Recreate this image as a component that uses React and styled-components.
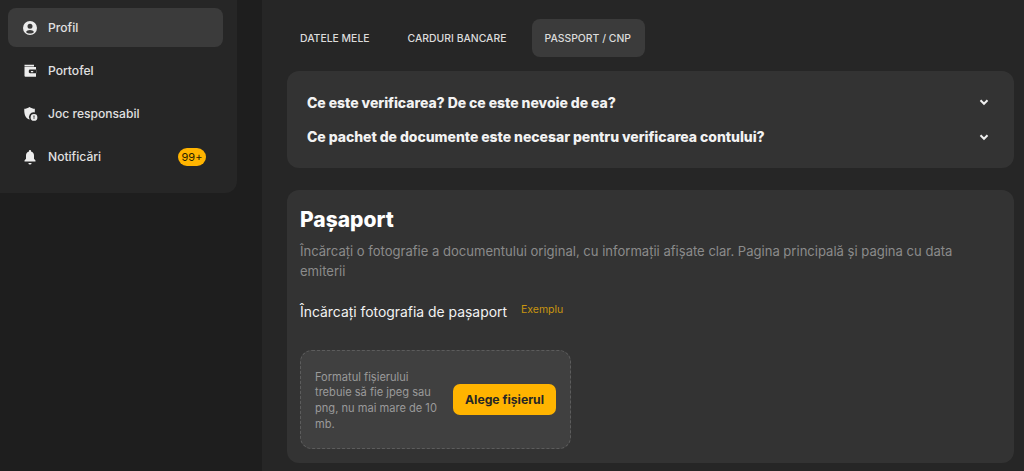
import React from "react";
import styled, { createGlobalStyle } from "styled-components";

const Global = createGlobalStyle`
  html, body { margin: 0; padding: 0; background: #1d1d1d; }
  body { font-family: Inter, "Noto Sans", sans-serif; overflow: hidden; }
  * { box-sizing: border-box; }
`;

const Page = styled.div`
  display: flex;
  width: 1024px;
  height: 471px;
  overflow: hidden;
  background: #1e1e1e;
`;
const Aside = styled.aside`
  width: 262px;
  flex: none;
`;
const SideCard = styled.nav`
  width: 237px;
  height: 193px;
  padding: 8px 14px 0 8px;
  background: #262626;
  border-radius: 0 0 12px 0;
  display: flex;
  flex-direction: column;
  gap: 4px;
`;
const NavItem = styled.a`
  display: flex;
  align-items: center;
  height: 39px;
  padding: 0 17px 0 14px;
  border-radius: 8px;
  font-size: 12.1px;
  font-weight: 500;
  color: #e0e0e0;
  background: ${(p) => (p.$active ? "#3b3b3b" : "transparent")};
`;
const NavIcon = styled.svg`
  width: 16px;
  height: 16px;
  margin-right: 10px;
  flex: none;
  fill: #ececec;
`;
const NavLabel = styled.span`
  flex: 1;
`;
const Badge = styled.span`
  width: 28px;
  height: 18px;
  border-radius: 9px;
  background: #ffb400;
  color: #2a2200;
  font-size: 11px;
  font-weight: 400;
  display: flex;
  align-items: center;
  justify-content: center;
`;
const Main = styled.main`
  flex: 1;
  background: #262626;
  padding: 19px 10px 0 25px;
`;
const Tabs = styled.div`
  display: flex;
  gap: 11px;
  margin-bottom: 14px;
`;
const Tab = styled.button`
  height: 38px;
  padding: 0 14px 0 13px;
  border: 0;
  border-radius: 8px;
  font: 500 10.42px Inter, sans-serif;
  text-transform: uppercase;
  color: #dcdcdc;
  background: ${(p) => (p.$active ? "#3b3b3b" : "transparent")};
`;
const FaqCard = styled.section`
  height: 97px;
  padding: 14px 20px;
  background: #333333;
  border-radius: 12px;
  margin-bottom: 22px;
  display: flex;
  flex-direction: column;
`;
const FaqRow = styled.div`
  height: 35px;
  display: flex;
  align-items: center;
  justify-content: space-between;
  padding-right: 5px;
  font-size: 14px;
  font-weight: 800;
  letter-spacing: -0.05px;
  color: #f2f2f2;
`;
const Chevron = styled.svg`
  width: 10px;
  height: 10px;
  fill: none;
  stroke: #f0f0f0;
  stroke-width: 2;
`;
const Card = styled.section`
  height: 273px;
  padding: 17px 13px 0;
  background: #333333;
  border-radius: 12px;
`;
const Title = styled.h2`
  margin: 0 0 9px;
  font-size: 21px;
  line-height: 25px;
  font-weight: 800;
  color: #ffffff;
`;
const Desc = styled.p`
  margin: 0 0 19px;
  font-size: 13.05px;
  line-height: 20px;
  color: #8b8b8b;
`;
const LabelRow = styled.div`
  display: flex;
  align-items: flex-start;
  gap: 14px;
  margin-bottom: 26px;
`;
const Label = styled.span`
  font-size: 13.9px;
  line-height: 24px;
  color: #f2f2f2;
`;
const Example = styled.span`
  font-size: 10.5px;
  line-height: 19px;
  color: #c9950f;
`;
const Drop = styled.div`
  width: 271px;
  height: 99px;
  padding: 0 14px;
  display: flex;
  align-items: center;
  justify-content: space-between;
  background: #404040;
  border: 1px dashed #5c5c5c;
  border-radius: 12px;
`;
const Hint = styled.p`
  width: 122px;
  margin: 3px 0 0;
  font-size: 11.1px;
  line-height: 15.6px;
  color: #9a9a9a;
`;
const Pick = styled.button`
  width: 103px;
  height: 31px;
  border: 0;
  border-radius: 7px;
  background: #ffb400;
  color: #262626;
  font: 700 12.2px Inter, sans-serif;
`;

const ChevronIcon = () => (
  <Chevron viewBox="0 0 10 10">
    <path d="M1.500 3.200 5 6.800l3.500-3.600" />
  </Chevron>
);

const UserIcon = () => (
  <NavIcon viewBox="0 0 16 16">
    <path fillRule="evenodd" d="M8 1a7 7 0 1 1 0 14A7 7 0 0 1 8 1Zm0 2.800a2.500 2.500 0 1 0 0 5 2.500 2.500 0 0 0 0-5Zm0 6.200c-1.900 0-3.400.8-4 2 1 1 2.400 1.600 4 1.600s3-.6 4-1.600c-.6-1.200-2.100-2-4-2Z" />
  </NavIcon>
);
const WalletIcon = () => (
  <NavIcon viewBox="0 0 16 16">
    <path fillRule="evenodd" d="M2.500 1.800h9.500v1.700H2.500V1.800Zm0 2.200h11.500v9.700H3.500a1 1 0 0 1-1-1V4Zm5.500 2.600a1.200 1.200 0 0 0-1.200 1.200v1.300c0 .7.500 1.200 1.200 1.200h6.200V6.600H8Zm.9 1.300h2.300v1.300H8.900V7.900Z" />
  </NavIcon>
);
const ShieldIcon = () => (
  <NavIcon viewBox="0 0 16 16">
    <path d="M7.500 1c1.600 1.100 3.500 1.700 5.300 1.800.1 1.300.1 2.500-.1 3.600a4.700 4.700 0 0 0-5 7.100l-.2.100C3.800 12.300 1.900 9 2.300 2.800 4.100 2.700 5.900 2.100 7.500 1Z" />
    <path fillRule="evenodd" d="M12 8a3.400 3.400 0 1 1 0 6.800A3.400 3.400 0 0 1 12 8Zm-.5 1.400v2.300h1V9.400h-1Zm0 2.800v.8h1v-.8h-1Z" />
  </NavIcon>
);
const BellIcon = () => (
  <NavIcon viewBox="0 0 16 16">
    <path d="M8 1c.6 0 1 .4 1 1v.6c1.900.4 3 2 3 4v3.200l1.500 1.800v.9H2.500v-.9L4 9.800V6.600c0-2 1.100-3.600 3-4V2c0-.6.400-1 1-1ZM6.400 13.900h3.200a1.600 1.600 0 0 1-3.200 0Z" />
  </NavIcon>
);

export default function App() {
  return (
    <Page>
      <Global />
      <Aside>
        <SideCard>
          <NavItem $active><UserIcon /><NavLabel>Profil</NavLabel></NavItem>
          <NavItem><WalletIcon /><NavLabel>Portofel</NavLabel></NavItem>
          <NavItem><ShieldIcon /><NavLabel>Joc responsabil</NavLabel></NavItem>
          <NavItem><BellIcon /><NavLabel>Notificări</NavLabel><Badge>99+</Badge></NavItem>
        </SideCard>
      </Aside>
      <Main>
        <Tabs>
          <Tab>Datele mele</Tab>
          <Tab>Carduri bancare</Tab>
          <Tab $active>Passport / CNP</Tab>
        </Tabs>
        <FaqCard>
          <FaqRow>Ce este verificarea? De ce este nevoie de ea?<ChevronIcon /></FaqRow>
          <FaqRow>Ce pachet de documente este necesar pentru verificarea contului?<ChevronIcon /></FaqRow>
        </FaqCard>
        <Card>
          <Title>Pașaport</Title>
          <Desc>Încărcați o fotografie a documentului original, cu informații afișate clar. Pagina principală și pagina cu data emiterii</Desc>
          <LabelRow>
            <Label>Încărcați fotografia de pașaport</Label>
            <Example>Exemplu</Example>
          </LabelRow>
          <Drop>
            <Hint>Formatul fișierului trebuie să fie jpeg sau png, nu mai mare de 10 mb.</Hint>
            <Pick>Alege fișierul</Pick>
          </Drop>
        </Card>
      </Main>
    </Page>
  );
}
